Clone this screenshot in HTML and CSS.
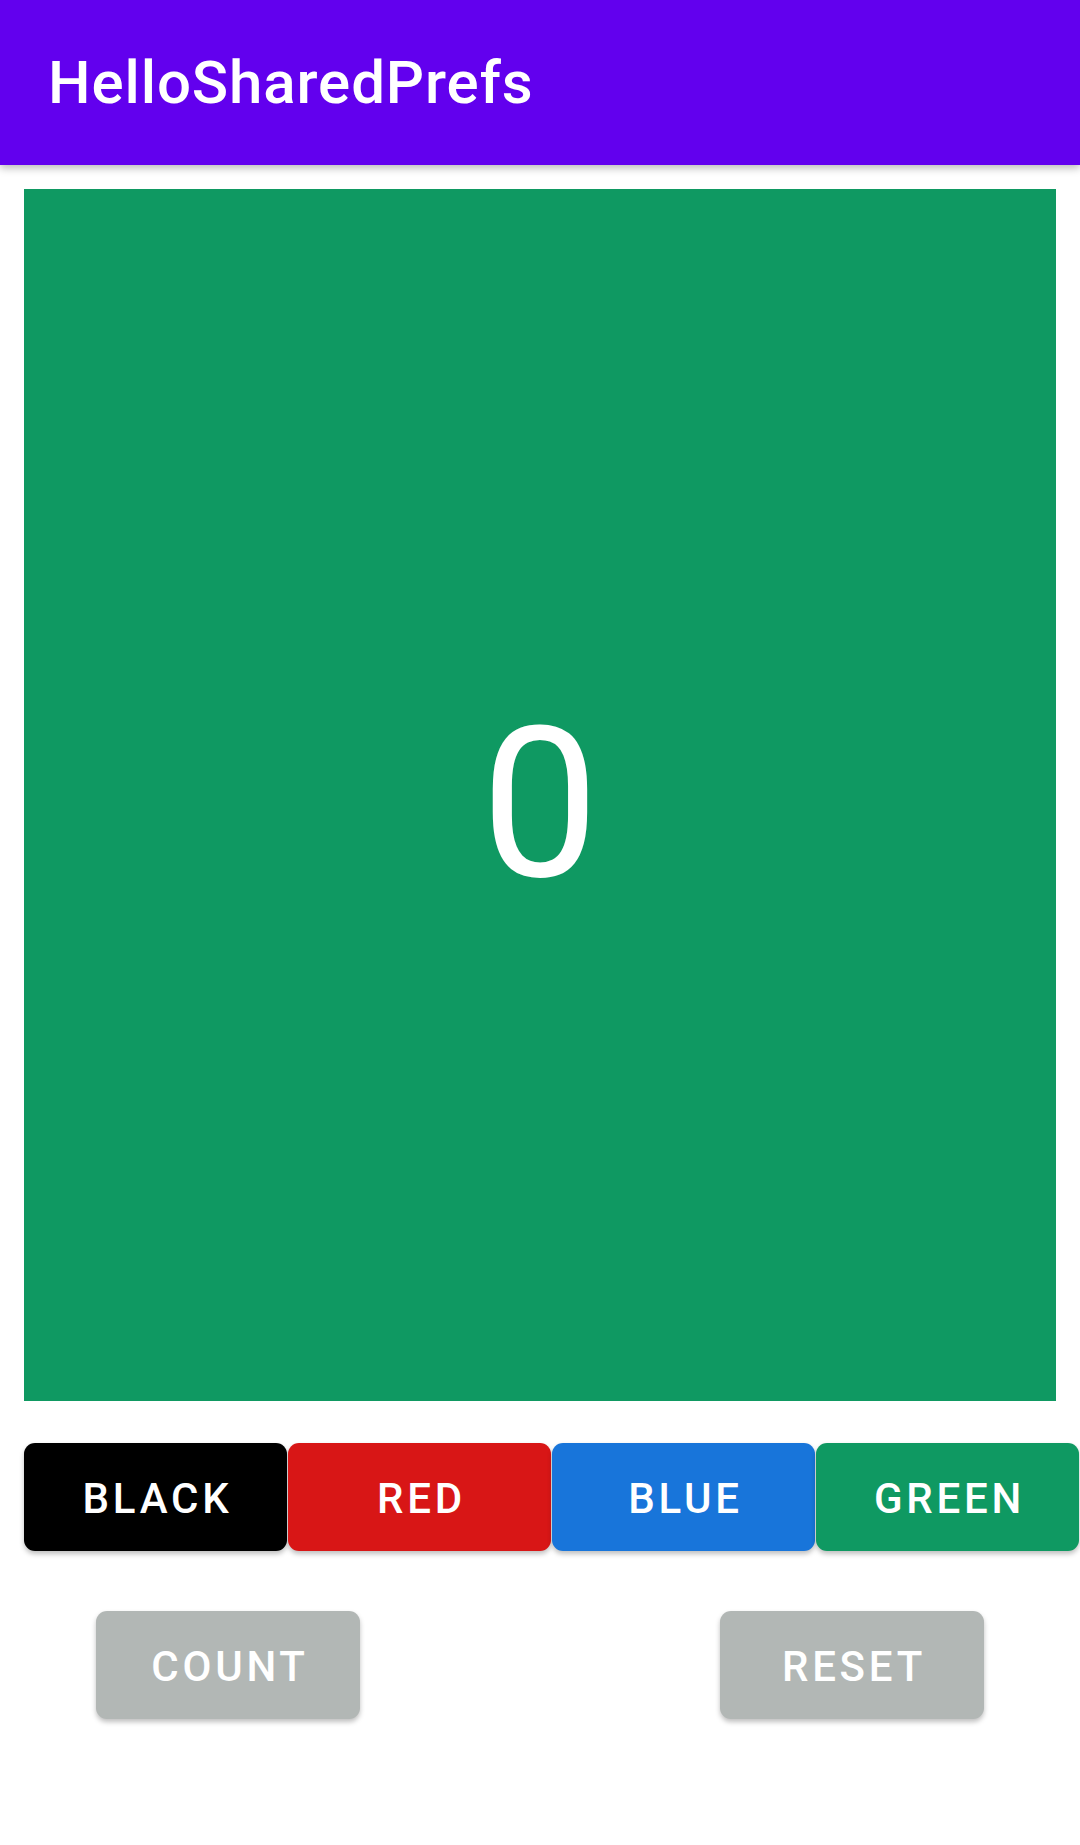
FILE: index.html
```html
<!DOCTYPE html>
<html>
<head>
<meta charset="utf-8">
<link rel="stylesheet" href="styles.css">
</head>
<body>
<header class="appbar"><h1 class="title">HelloSharedPrefs</h1></header>
<main class="content">
  <div class="counter"><span class="count-value">0</span></div>
  <div class="color-row">
    <button class="btn btn-color btn-black">BLACK</button>
    <button class="btn btn-color btn-red">RED</button>
    <button class="btn btn-color btn-blue">BLUE</button>
    <button class="btn btn-color btn-green">GREEN</button>
  </div>
  <div class="action-row">
    <button class="btn btn-action">COUNT</button>
    <button class="btn btn-action">RESET</button>
  </div>
</main>
</body>
</html>
```
FILE: styles.css
```css
* { box-sizing: border-box; }
html, body { margin: 0; padding: 0; }
body {
  width: 1080px;
  height: 1845px;
  background: #ffffff;
  font-family: Roboto, "Noto Sans", sans-serif;
  overflow: hidden;
}
.appbar {
  height: 165px;
  background: #6200ee;
  display: flex;
  align-items: center;
  padding-left: 48px;
  box-shadow: 0 3px 8px rgba(0,0,0,0.28);
  position: relative;
  z-index: 1;
}
.title {
  margin: 0;
  color: #ffffff;
  font-size: 60px;
  font-weight: 500;
  letter-spacing: 0.9px;
  line-height: 1;
}
.content {
  padding: 24px 0 0 24px;
  display: flex;
  flex-direction: column;
}
.counter {
  width: 1032px;
  height: 1212px;
  background: #0f9962;
  display: flex;
  align-items: center;
  justify-content: center;
}
.count-value {
  color: #ffffff;
  font-size: 210px;
  font-weight: 400;
  line-height: 1;
  margin-top: 18px;
}
.color-row {
  margin-top: 42px;
  display: flex;
  gap: 1px;
}
.btn {
  border: none;
  font-family: Roboto, "Noto Sans", sans-serif;
  font-size: 42px;
  font-weight: 500;
  letter-spacing: 3.75px;
  color: #ffffff;
  border-radius: 11px;
  height: 108px;
  padding: 2px 0 0 4px;
  box-shadow: 0 3px 5px rgba(0,0,0,0.25);
}
.btn-color { width: 263px; }
.btn-black { background: #000000; }
.btn-red { background: #d81616; }
.btn-blue { background: #1875da; }
.btn-green { background: #0f9962; }
.action-row {
  margin-top: 60px;
  padding-left: 72px;
  display: flex;
  gap: 360px;
}
.btn-action {
  width: 264px;
  background: #b2b7b5;
}
```
